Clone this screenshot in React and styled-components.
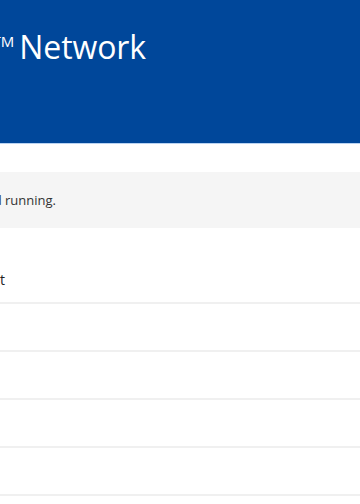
import React from 'react';
import styled, { createGlobalStyle } from 'styled-components';

const GlobalStyle = createGlobalStyle`
  html, body {
    margin: 0;
    padding: 0;
    background: #ffffff;
    overflow: hidden;
  }
  body {
    font-family: "Open Sans", "Liberation Sans", sans-serif;
    color: #333333;
  }
`

const Page = styled.div`
  width: 360px;
  height: 504px;
  overflow: hidden;
`

const Header = styled.header`
  height: 144px;
  background: #00479a;
  border-bottom: 1px solid #b9d3f2;
  padding-top: 25px;
  box-sizing: border-box;
`

// text whose left part runs off the page: the right edge is fixed, the rest overflows left
const Clip = styled.div`
  display: flex;
  justify-content: flex-end;
  width: ${props => props.edge}px;
  white-space: nowrap;
`

const Title = styled.h1`
  margin: 0;
  font-size: 32px;
  font-weight: 400;
  line-height: 44px;
  color: #ffffff;
  letter-spacing: -0.1px;
`

const Mark = styled.sup`
  font-size: 15px;
  line-height: 0;
  vertical-align: 12px;
  margin-right: 5px;
  letter-spacing: 0;
`

const Notice = styled.div`
  margin-top: 28px;
  height: 56px;
  background: #f5f5f5;
  display: flex;
  align-items: center;
  font-size: 13px;
  color: #333333;
`

const List = styled.ul`
  list-style: none;
  margin: 0;
  padding: 0;
`

const Row = styled.li`
  height: ${props => props.tall ? 76 : 48}px;
  box-sizing: border-box;
  border-bottom: 2px solid #f0f0f0;
  display: flex;
  align-items: flex-end;
  padding-bottom: ${props => props.tall ? 13 : 0}px;
  font-size: 14px;
  color: #222222;
`

const services = ['', '', '', ''];

export default function App() {
  return (
    <Page>
      <GlobalStyle />
      <Header>
        <Clip edge={146}>
          <Title>PlayStation<Mark>TM</Mark>Network</Title>
        </Clip>
      </Header>
      <Notice>
        <Clip edge={56}>All services are up and running.</Clip>
      </Notice>
      <List>
        <Row tall>
          <Clip edge={5}>Account Management</Clip>
        </Row>
        {services.map((s, i) => (
          <Row key={i}>{s}</Row>
        ))}
      </List>
    </Page>
  );
}
